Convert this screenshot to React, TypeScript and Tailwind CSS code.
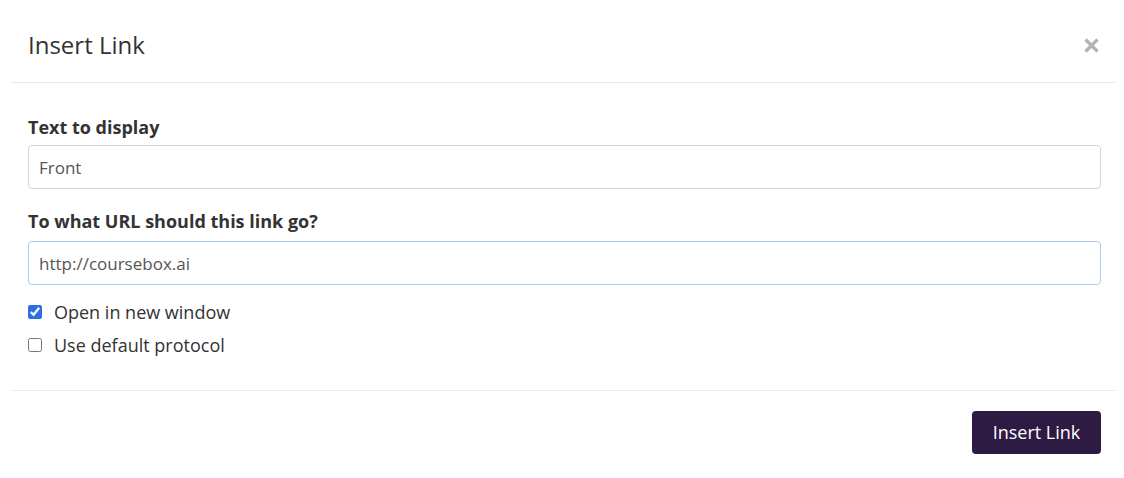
export default function App() {
  return (
    <div
      className="w-[1124px] h-[478px] bg-white pl-[11px] pr-[9px] text-[#333]"
      style={{ fontFamily: '"Open Sans", "Liberation Sans", sans-serif' }}
    >
      {/* header */}
      <div className="h-[83px] flex items-center justify-between border-b border-[#e9e9e9] pl-[17px] pr-[15px] pt-[8px]">
        <h2 className="text-[24px] leading-none font-normal text-[#333]">Insert Link</h2>
        <button className="text-[#b3b3b3]" aria-label="Close">
          <svg width="17" height="17" viewBox="0 0 17 17">
            <path d="M2.5 2.5 L14.5 14.5 M14.5 2.5 L2.5 14.5" stroke="currentColor" strokeWidth="3.2" />
          </svg>
        </button>
      </div>

      {/* body */}
      <div className="h-[308px] border-b border-[#e9e9e9] px-[17px] pt-[32px]">
        <label className="block text-[18px] leading-[24px] font-bold text-[#333]">Text to display</label>
        <input
          readOnly
          value="Front"
          className="mt-[6px] block w-[1073px] h-[44px] rounded-[4px] border border-[#d4d4d4] px-[10px] text-[17px] text-[#555] outline-none"
        />
        <label className="mt-[20px] block text-[18px] leading-[24px] font-bold text-[#333]">To what URL should this link go?</label>
        <input
          readOnly
          value="http://coursebox.ai"
          className="mt-[8px] block w-[1073px] h-[44px] rounded-[4px] border border-[#a9cbf2] px-[10px] text-[17px] text-[#555] outline-none"
        />
        <div className="mt-[16px] flex items-center gap-[12px] h-[22px]">
          <input type="checkbox" defaultChecked className="w-[14px] h-[14px] m-0 accent-[#2f6fe4]" />
          <span className="text-[18px] text-[#333]">Open in new window</span>
        </div>
        <div className="mt-[11px] flex items-center gap-[12px] h-[22px]">
          <input type="checkbox" className="w-[14px] h-[14px] m-0" />
          <span className="text-[18px] text-[#333]">Use default protocol</span>
        </div>
      </div>

      {/* footer */}
      <div className="flex justify-end pt-[20px] pr-[14px]">
        <button className="w-[129px] h-[43px] rounded-[4px] bg-[#2e1b44] text-white text-[18px]">Insert Link</button>
      </div>
    </div>
  );
}
